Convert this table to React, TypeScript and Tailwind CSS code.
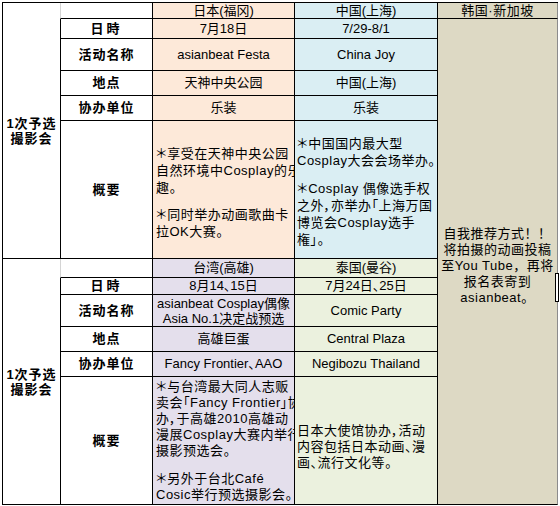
import type { ReactNode } from 'react';

const base = 'flex border-r border-b border-black whitespace-nowrap';

function Cell({ className = '', children }: { className?: string; children?: ReactNode }) {
  return <div className={`${base} items-center justify-center text-center ${className}`}>{children}</div>;
}

function Label({ children, className = '' }: { children: ReactNode; className?: string }) {
  return (
    <div className={`${base} border-l items-center justify-center font-bold tracking-[1px] text-[13px] ${className}`}>
      {children}
    </div>
  );
}

function Lines({ lines, lh, gap }: { lines: string[]; lh: string; gap: string }) {
  return (
    <div className="flex flex-col">
      {lines.map((l, i) =>
        l === '' ? <div key={i} className={gap} /> : <div key={i} className={lh}>{l}</div>
      )}
    </div>
  );
}

export default function App() {
  return (
    <div className="relative h-[506px] w-[560px] overflow-hidden bg-white text-black font-['Liberation_Sans','Noto_Sans_CJK_SC',sans-serif] [font-feature-settings:'palt']">
      <div className="ml-[2px] mt-[2px] grid w-[556px] grid-cols-[57px_93px_142px_143px_120px] grid-rows-[16px_20px_32px_25px_25px_138px_19px_17px_32px_25px_25px_128px] border-t border-l border-black text-[13px]">
        {/* group 1 */}
        <div className="row-span-6 flex flex-col items-center justify-center border-b border-black text-[13px] font-bold leading-[15px] tracking-[1px]">
          <div>1次予选</div>
          <div>撮影会</div>
        </div>
        <div className="border-r border-b border-l border-r-black border-b-black border-l-[#d4d4d4]" />
        <Cell className="bg-[#fde9d9]">日本(福冈)</Cell>
        <Cell className="bg-[#daeef3]">中国(上海)</Cell>
        <Cell className="bg-[#ddd9c4] border-r-[#8c8c8c] tracking-[0.5px]">韩国·新加坡</Cell>

        <Label className="tracking-[3px]">日時</Label>
        <Cell className="bg-[#fde9d9]">7月18日</Cell>
        <Cell className="bg-[#daeef3]">7/29-8/1</Cell>
        <div className={`${base} row-span-11 items-center justify-center bg-[#ddd9c4] border-r-[#8c8c8c] pt-[8px] text-center tracking-[0.5px] [font-feature-settings:normal]`}>
          <Lines
            lines={['自我推荐方式！！', '将拍摄的动画投稿', '至You Tube，再将', '报名表寄到', 'asianbeat。']}
            lh="leading-[16px]"
            gap="h-[16px]"
          />
        </div>

        <Label>活动名称</Label>
        <Cell className="bg-[#fde9d9]">asianbeat Festa</Cell>
        <Cell className="bg-[#daeef3]">China Joy</Cell>

        <Label>地点</Label>
        <Cell className="bg-[#fde9d9]">天神中央公园</Cell>
        <Cell className="bg-[#daeef3]">中国(上海)</Cell>

        <Label>协办单位</Label>
        <Cell className="bg-[#fde9d9]">乐装</Cell>
        <Cell className="bg-[#daeef3]">乐装</Cell>

        <Label className="tracking-[1px]">概要</Label>
        <div className={`${base} items-center justify-start overflow-hidden bg-[#fde9d9] pl-[3px] pt-[6px] tracking-[0.5px]`}>
          <Lines
            lines={['＊享受在天神中央公园', '自然环境中Cosplay的乐', '趣。', '', '＊同时举办动画歌曲卡', '拉OK大赛。']}
            lh="leading-[17px]"
            gap="h-[10px]"
          />
        </div>
        <div className={`${base} items-center justify-start overflow-hidden bg-[#daeef3] pl-[2px] pt-[4px] tracking-[0.5px]`}>
          <Lines
            lines={[
              '＊中国国内最大型',
              'Cosplay大会会场举办。',
              '',
              '＊Cosplay 偶像选手权',
              '之外，亦举办「上海万国',
              '博览会Cosplay选手',
              '権」。',
            ]}
            lh="leading-[17px]"
            gap="h-[11px]"
          />
        </div>

        {/* group 2 */}
        <div className="row-span-6 flex flex-col items-center justify-center border-b border-black text-[13px] font-bold leading-[15px] tracking-[1px]">
          <div>1次予选</div>
          <div>撮影会</div>
        </div>
        <div className="border-r border-b border-l border-r-black border-b-black border-l-[#d4d4d4]" />
        <Cell className="bg-[#e4dfec]">台湾(高雄)</Cell>
        <Cell className="bg-[#ebf1de]">泰国(曼谷)</Cell>

        <Label className="tracking-[3px]">日時</Label>
        <Cell className="bg-[#e4dfec]">8月14、15日</Cell>
        <Cell className="bg-[#ebf1de]">7月24日、25日</Cell>

        <Label>活动名称</Label>
        <Cell className="bg-[#e4dfec] overflow-hidden">
          <Lines lines={['asianbeat Cosplay偶像', 'Asia No.1决定战预选']} lh="leading-[15px]" gap="h-[15px]" />
        </Cell>
        <Cell className="bg-[#ebf1de]">Comic Party</Cell>

        <Label>地点</Label>
        <Cell className="bg-[#e4dfec]">高雄巨蛋</Cell>
        <Cell className="bg-[#ebf1de]">Central Plaza</Cell>

        <Label>协办单位</Label>
        <Cell className="bg-[#e4dfec]">Fancy Frontier、AAO</Cell>
        <Cell className="bg-[#ebf1de]">Negibozu Thailand</Cell>

        <Label className="tracking-[1px]">概要</Label>
        <div className={`${base} items-start justify-start overflow-hidden bg-[#e4dfec] pl-[3px] pt-[2px] tracking-[0.5px]`}>
          <Lines
            lines={[
              '＊与台湾最大同人志贩',
              '卖会「Fancy Frontier」协',
              '办，于高雄2010高雄动',
              '漫展Cosplay大赛内举行',
              '摄影预选会。',
              '',
              '＊另外于台北Café',
              'Cosic举行预选摄影会。',
            ]}
            lh="leading-[16px]"
            gap="h-[12px]"
          />
        </div>
        <div className={`${base} items-center justify-start overflow-hidden bg-[#ebf1de] pl-[2px] pt-[12px] tracking-[0.5px]`}>
          <Lines
            lines={['日本大使馆协办，活动', '内容包括日本动画、漫', '画、流行文化等。']}
            lh="leading-[16px]"
            gap="h-[16px]"
          />
        </div>
      </div>
      <div className="absolute left-[555px] top-[273px] h-[29px] w-[4px] border border-black bg-white" />
    </div>
  );
}
